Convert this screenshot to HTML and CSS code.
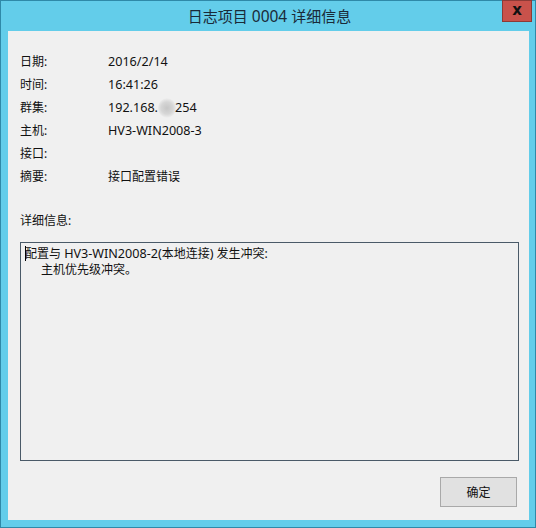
FILE: index.html
```html
<!DOCTYPE html>
<html lang="zh-CN">
<head>
<meta charset="utf-8">
<title>日志项目 0004 详细信息</title>
<link rel="stylesheet" href="styles.css">
</head>
<body>
<div class="window">
  <div class="titlebar">
    <div class="title">日志项目 <span class="lat">0004</span> 详细信息</div>
    <div class="close">x</div>
  </div>
  <div class="content">
    <div class="fields">
      <div class="label">日期:</div><div class="value lat">2016/2/14</div>
      <div class="label">时间:</div><div class="value lat">16:41:26</div>
      <div class="label">群集:</div><div class="value lat">192.168.<span class="blur"></span>254</div>
      <div class="label">主机:</div><div class="value lat">HV3-WIN2008-3</div>
      <div class="label">接口:</div><div class="value"></div>
      <div class="label">摘要:</div><div class="value">接口配置错误</div>
    </div>
    <div class="detail-label">详细信息:</div>
    <div class="textbox">
      <div class="line"><span class="caret"></span>配置与 <span class="lat">HV3-WIN2008-2(</span>本地连接<span class="lat">)</span> 发生冲突:</div>
      <div class="line indent">主机优先级冲突。</div>
    </div>
    <div class="actions">
      <div class="button">确定</div>
    </div>
  </div>
</div>
</body>
</html>
```
FILE: styles.css
```css
html, body {
  margin: 0;
  padding: 0;
}
body {
  width: 536px;
  height: 528px;
  overflow: hidden;
  font-family: "Noto Sans", "Noto Sans CJK SC", sans-serif;
}
.window {
  box-sizing: border-box;
  width: 536px;
  height: 528px;
  background: #63cdea;
  border: 1px solid #2f89a8;
  display: flex;
  flex-direction: column;
  padding: 0 6px 7px 7px;
}
.titlebar {
  height: 30px;
  position: relative;
  display: flex;
  align-items: center;
  justify-content: center;
}
.title {
  font-size: 15px;
  color: #1a2a38;
  margin-left: 2px;
  margin-top: 0;
}
.close {
  position: absolute;
  right: -3px;
  top: -1px;
  width: 30px;
  height: 22px;
  background: #c9524b;
  border: 1px solid #8e3a36;
  box-sizing: border-box;
  color: #111;
  font-weight: bold;
  font-size: 15px;
  line-height: 19px;
  text-align: center;
  font-family: "DejaVu Sans", sans-serif;
}
.content {
  flex: 1;
  background: #f0f0f0;
  padding: 19px 11px 0 12px;
  color: #111;
  font-size: 12px;
  display: flex;
  flex-direction: column;
}
.lat {
  font-size: 12.6px;
}
.title .lat {
  font-size: 15.5px;
}
.fields {
  display: grid;
  grid-template-columns: 88px 1fr;
  grid-auto-rows: 23px;
  line-height: 23px;
}
.value {
  display: flex;
  align-items: center;
}
.blur {
  display: inline-block;
  width: 18px;
  height: 20px;
  border-radius: 50%;
  background: radial-gradient(circle, #c6c6c6 0%, #d6d6d6 45%, rgba(240,240,240,0) 75%);
  margin: 0 -1px 0 0;
}
.detail-label {
  margin-top: 21px;
  line-height: 23px;
}
.textbox {
  margin-top: 10px;
  height: 219px;
  box-sizing: border-box;
  border: 1px solid #4a5a68;
  background: #f0f0f0;
  padding: 3px 4px 0 4px;
  width: 499px;
}
.line {
  line-height: 16px;
  white-space: nowrap;
}
.indent {
  padding-left: 16px;
}
.caret {
  display: inline-block;
  width: 1px;
  height: 15px;
  background: #000;
  vertical-align: -3px;
  margin-right: -1px;
}
.actions {
  display: flex;
  justify-content: flex-end;
  margin-top: 16px;
  padding-right: 1px;
}
.button {
  width: 77px;
  height: 30px;
  box-sizing: border-box;
  background: #e1e1e1;
  border: 1px solid #a9a9a9;
  display: flex;
  align-items: center;
  justify-content: center;
  font-size: 12px;
}
```
